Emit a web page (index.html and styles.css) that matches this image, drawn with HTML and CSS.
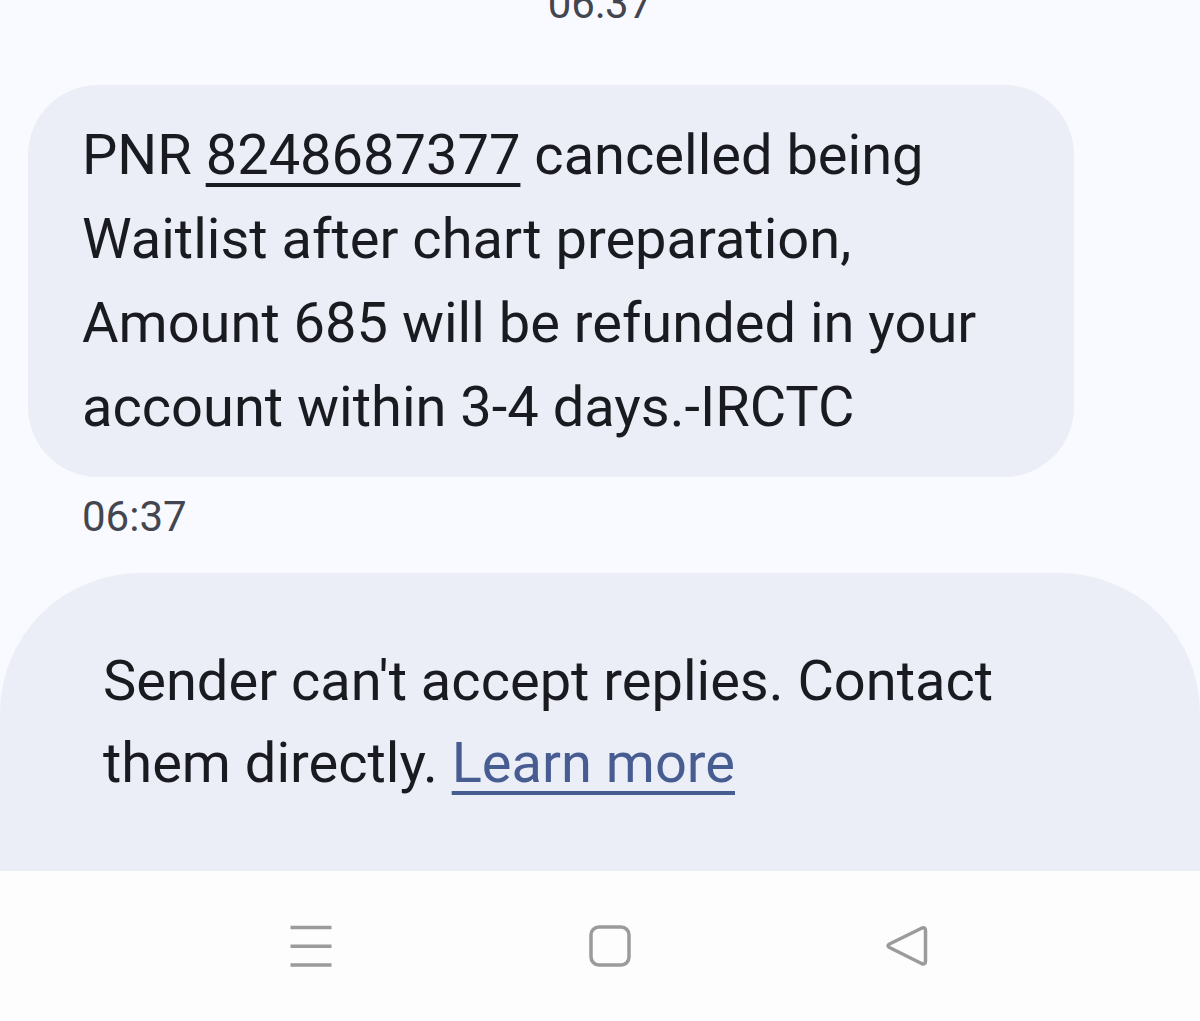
FILE: index.html
```html
<!DOCTYPE html>
<html lang="en">

<head>
    <meta charset="UTF-8">
    <meta name="viewport" content="width=device-width, initial-scale=1.0">
    <title>Messages</title>
    <link rel="stylesheet" href="styles.css">
</head>

<body>
    <main class="conversation">
        <time class="time-top">06:37</time>
        <p class="bubble">
            PNR <a href="tel:8248687377" class="pnr">8248687377</a> cancelled being<br>
            Waitlist after chart preparation,<br>
            Amount 685 will be refunded in your<br>
            account within 3-4 days.-IRCTC
        </p>
        <time class="time">06:37</time>
    </main>

    <section class="notice">
        <p>Sender can't accept replies. Contact<br>
            them directly. <a href="#" class="learn-more">Learn more</a></p>
    </section>

    <nav class="navbar">
        <button type="button" class="nav-button" aria-label="Recent apps">
            <svg width="48" height="48" viewBox="0 0 48 48">
                <path d="M3.500 5.500h41M3.500 24.200h41M3.500 43h41" />
            </svg>
        </button>
        <button type="button" class="nav-button" aria-label="Home">
            <svg width="48" height="48" viewBox="0 0 48 48">
                <rect x="6" y="5" width="38" height="38" rx="8" />
            </svg>
        </button>
        <button type="button" class="nav-button" aria-label="Back">
            <svg width="48" height="48" viewBox="0 0 48 48">
                <path d="M38.500 6.200Q42.500 4.500 42.500 8.500V39Q42.500 43 38.500 41.500L6.500 25.500Q3.500 23.800 6.500 22Z" />
            </svg>
        </button>
    </nav>
</body>

</html>
```

FILE: styles.css
```css
* {
    box-sizing: border-box;
}

body {
    margin: 0;
    min-height: 100vh;
    display: flex;
    flex-direction: column;
    background-color: #f9faff;
    color: #1a1b21;
    font-family: Roboto, "Open Sans", sans-serif;
}

.conversation {
    display: flex;
    flex-direction: column;
    padding: 0 28px;
}

.time-top {
    align-self: center;
    height: 85px;
    margin-top: -20px;
    margin-bottom: 20px;
    line-height: 48px;
    font-size: 42px;
    color: #44464f;
}

.bubble {
    margin: 0 98px 0 0;
    padding: 28px 0 28px 54px;
    background-color: #ebeef6;
    border-radius: 70px;
    font-size: 56px;
    line-height: 84px;
}

.pnr {
    color: inherit;
    text-decoration-thickness: 4px;
    text-underline-offset: 9px;
}

.time {
    padding: 16px 54px 32px;
    line-height: 48px;
    font-size: 42px;
    color: #44464f;
}

.notice {
    flex: 1;
    padding: 67px 103px;
    background-color: #ebeef6;
    border-radius: 140px 140px 0 0;
    font-size: 56px;
    line-height: 82px;
}

.notice p {
    margin: 0;
}

.learn-more {
    color: #475d92;
    text-decoration-thickness: 4px;
    text-underline-offset: 9px;
}

.navbar {
    display: flex;
    justify-content: space-around;
    padding: 51px 144px 51px 162px;
    background-color: #fdfdfd;
}

.nav-button {
    display: flex;
    padding: 0;
    border: none;
    background: none;
}

.nav-button svg {
    fill: none;
    stroke: #9b9b9b;
    stroke-width: 3.5;
    stroke-linejoin: round;
}
```
